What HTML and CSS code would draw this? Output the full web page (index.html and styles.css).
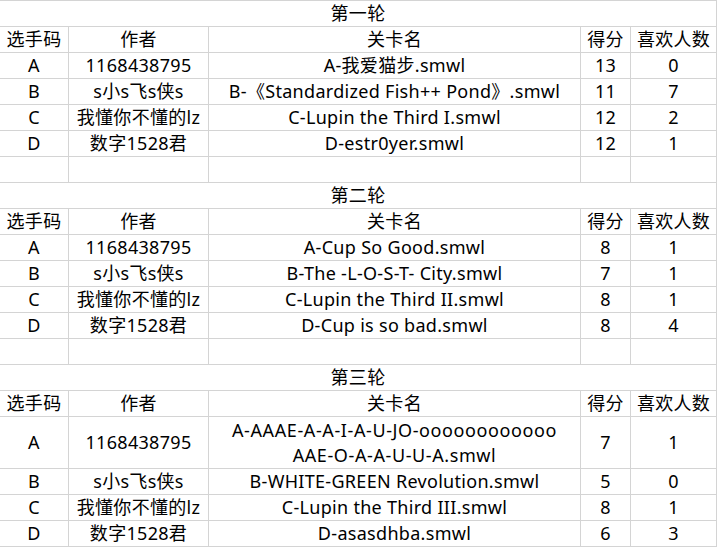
FILE: index.html
```html
<!DOCTYPE html>
<html>
<head>
<meta charset="utf-8">
<link rel="stylesheet" href="styles.css">
</head>
<body>
<table class="sheet">
  <colgroup>
    <col class="c1"><col class="c2"><col class="c3"><col class="c4"><col class="c5">
  </colgroup>
  <tbody>
    <tr><td class="title" colspan="5">第一轮</td></tr>
    <tr><td>选手码</td><td>作者</td><td>关卡名</td><td>得分</td><td>喜欢人数</td></tr>
    <tr><td>A</td><td>1168438795</td><td>A-我爱猫步.smwl</td><td>13</td><td>0</td></tr>
    <tr><td>B</td><td>s小s飞s侠s</td><td>B-《Standardized Fish++ Pond》.smwl</td><td>11</td><td>7</td></tr>
    <tr><td>C</td><td>我懂你不懂的lz</td><td>C-Lupin the Third I.smwl</td><td>12</td><td>2</td></tr>
    <tr><td>D</td><td>数字1528君</td><td>D-estr0yer.smwl</td><td>12</td><td>1</td></tr>
    <tr><td></td><td></td><td></td><td></td><td></td></tr>

    <tr><td class="title" colspan="5">第二轮</td></tr>
    <tr><td>选手码</td><td>作者</td><td>关卡名</td><td>得分</td><td>喜欢人数</td></tr>
    <tr><td>A</td><td>1168438795</td><td>A-Cup So Good.smwl</td><td>8</td><td>1</td></tr>
    <tr><td>B</td><td>s小s飞s侠s</td><td>B-The -L-O-S-T- City.smwl</td><td>7</td><td>1</td></tr>
    <tr><td>C</td><td>我懂你不懂的lz</td><td>C-Lupin the Third II.smwl</td><td>8</td><td>1</td></tr>
    <tr><td>D</td><td>数字1528君</td><td>D-Cup is so bad.smwl</td><td>8</td><td>4</td></tr>
    <tr><td></td><td></td><td></td><td></td><td></td></tr>

    <tr><td class="title" colspan="5">第三轮</td></tr>
    <tr><td>选手码</td><td>作者</td><td>关卡名</td><td>得分</td><td>喜欢人数</td></tr>
    <tr class="tall"><td>A</td><td>1168438795</td><td class="wrap">A-AAAE-A-A-I-A-U-JO-oooooooooooo<br>AAE-O-A-A-U-U-A.smwl</td><td>7</td><td>1</td></tr>
    <tr><td>B</td><td>s小s飞s侠s</td><td>B-WHITE-GREEN Revolution.smwl</td><td>5</td><td>0</td></tr>
    <tr><td>C</td><td>我懂你不懂的lz</td><td>C-Lupin the Third III.smwl</td><td>8</td><td>1</td></tr>
    <tr><td>D</td><td>数字1528君</td><td>D-asasdhba.smwl</td><td>6</td><td>3</td></tr>
  </tbody>
</table>
</body>
</html>
```

FILE: styles.css
```css
html, body {
  margin: 0;
  padding: 0;
  background: #ffffff;
}

.sheet {
  table-layout: fixed;
  border-collapse: separate;
  border-spacing: 0;
  width: 717px;
  border-top: 1px solid #d4d4d4;
  font-family: "Noto Sans", "Noto Sans CJK SC", sans-serif;
  font-size: 18px;
  color: #000000;
}

.c1 { width: 69px; }
.c2 { width: 140px; }
.c3 { width: 372px; }
.c4 { width: 50px; }
.c5 { width: 86px; }

.sheet td {
  height: 25px;
  padding: 0;
  border-right: 1px solid #d4d4d4;
  border-bottom: 1px solid #d4d4d4;
  text-align: center;
  vertical-align: middle;
  line-height: 25px;
  letter-spacing: 0.3px;
  white-space: nowrap;
  overflow: hidden;
}

.sheet .tall td {
  height: 51px;
}

.sheet td.wrap {
  line-height: 25px;
  letter-spacing: 0.6px;
}
```
